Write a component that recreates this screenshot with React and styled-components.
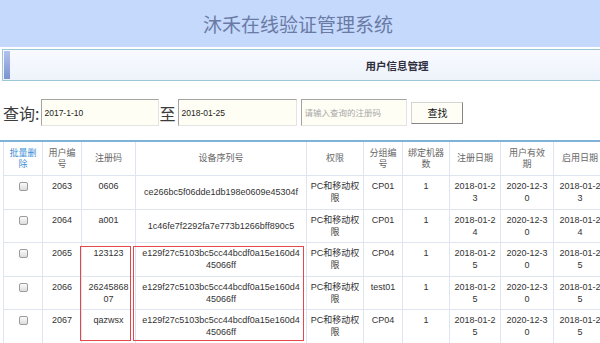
import React from 'react'
import styled, { createGlobalStyle } from 'styled-components'

const GlobalStyle = createGlobalStyle`
    html, body {
        margin: 0;
        padding: 0;
        overflow: hidden;
        background: #fff;
        font-family: "Liberation Sans", "Noto Sans CJK SC", sans-serif;
    }
`

const Page = styled.div`
    width: 600px;
    height: 343px;
    overflow: hidden;
`

const Header = styled.div`
    height: 47px;
    background-color: #c4d9fc;
    display: flex;
    align-items: center;
    justify-content: center;
`

const Title = styled.h1`
    margin: 0 4px 0 0;
    font-family: "Noto Sans CJK SC", sans-serif;
    font-weight: normal;
    font-size: 19px;
    color: #6b7aa5;
`

const SubBar = styled.div`
    margin: 2px 0 0 2px;
    height: 28px;
    border: 1px solid #9cc7d7;
    border-right: none;
    padding: 1px 0 1px 1px;
    display: flex;
    background: linear-gradient(#f8faff, #eef3fb);
`

const Accent = styled.div`
    width: 6px;
    background: linear-gradient(#b3c1ec, #7d93d0);
`

const SubTitle = styled.div`
    flex: 1;
    display: flex;
    align-items: center;
    justify-content: center;
    padding-left: 184px;
    font-family: "Noto Sans CJK SC", sans-serif;
    font-weight: bold;
    font-size: 10.5px;
    color: #2e2e3e;
`

const QueryRow = styled.div`
    margin-top: 18px;
    padding-left: 3px;
    height: 27px;
    display: flex;
    align-items: center;
`

const Label = styled.span`
    font-family: "Noto Sans CJK SC", sans-serif;
    font-size: 16px;
    color: #3c3c3c;
    margin-right: ${p => p.gap || 1}px;
`

const Field = styled.input`
    box-sizing: border-box;
    width: ${p => p.w}px;
    height: 27px;
    margin-right: ${p => p.gap || 0}px;
    padding: 0 2px;
    border: 1px solid;
    border-color: #a3a3a3 #e4e4e4 #e4e4e4 #a3a3a3;
    background-color: #fffef4;
    font-family: "Liberation Sans", "Noto Sans CJK SC", sans-serif;
    font-size: 8.5px;
    color: #222;
    outline: none;
    &::placeholder {
        color: #a8a8a8;
    }
`

const SearchBtn = styled.button`
    box-sizing: border-box;
    width: 52px;
    height: 22px;
    border: 1px solid;
    border-color: #d4d4d4 #858585 #858585 #d4d4d4;
    background-color: #fffef6;
    font-family: "Noto Sans CJK SC", sans-serif;
    font-size: 10px;
    color: #111;
    padding: 0;
`

const TableWrap = styled.div`
    position: relative;
    margin-top: 14px;
    border-top: 2px solid #7fb2d9;
`

const Table = styled.table`
    margin-left: 3px;
    width: 603px;
    table-layout: fixed;
    border-collapse: collapse;
    font-size: 9px;
`

const Th = styled.th`
    padding: 5.5px 4.5px;
    line-height: 11px;
    font-weight: normal;
    color: ${p => (p.link ? '#3f8fd6' : '#666')};
    border: 1px solid #dfe5ee;
    border-top: none;
    vertical-align: middle;
    word-break: break-all;
`

const Td = styled.td`
    padding: 4.25px ${p => (p.wide ? 5 : 3)}px;
    line-height: 12px;
    color: #333;
    text-align: center;
    border: 1px solid #dfe5ee;
    vertical-align: ${p => (p.mid ? 'middle' : 'top')};
    word-break: break-all;
`

const Check = styled.input`
    appearance: none;
    display: block;
    margin: 2px auto 0;
    width: 9px;
    height: 9px;
    border: 1px solid #9c9c9c;
    border-radius: 2px;
    background: linear-gradient(#fbfbfb, #dcdcdc);
`

const Mark = styled.div`
    position: absolute;
    top: 104px;
    left: ${p => p.x}px;
    width: ${p => p.w}px;
    height: 95px;
    border: 1.5px solid #e5484b;
    box-sizing: border-box;
`

const columns = [
    { title: '批量删除', width: 39, link: true },
    { title: '用户编号', width: 39 },
    { title: '注册码', width: 54 },
    { title: '设备序列号', width: 171 },
    { title: '权限', width: 57 },
    { title: '分组编号', width: 39 },
    { title: '绑定机器数', width: 47 },
    { title: '注册日期', width: 51 },
    { title: '用户有效期', width: 53 },
    { title: '启用日期', width: 53 },
]

const users = [
    ['2063', '0606', 'ce266bc5f06dde1db198e0609e45304f', 'CP01', '2018-01-23'],
    ['2064', 'a001', '1c46fe7f2292fa7e773b1266bff890c5', 'CP01', '2018-01-24'],
    ['2065', '123123', 'e129f27c5103bc5cc44bcdf0a15e160d445066ff', 'CP04', '2018-01-25'],
    ['2066', '2624586807', 'e129f27c5103bc5cc44bcdf0a15e160d445066ff', 'test01', '2018-01-25'],
    ['2067', 'qazwsx', 'e129f27c5103bc5cc44bcdf0a15e160d445066ff', 'CP04', '2018-01-25'],
]

function App() {
    return (
        <Page>
            <GlobalStyle />
            <Header>
                <Title>沐禾在线验证管理系统</Title>
            </Header>
            <SubBar>
                <Accent />
                <SubTitle>用户信息管理</SubTitle>
            </SubBar>
            <QueryRow>
                <Label gap={2}>查询:</Label>
                <Field w={118} defaultValue="2017-1-10" />
                <Label gap={3}>至</Label>
                <Field w={119} gap={4} defaultValue="2018-01-25" />
                <Field w={106} gap={4} placeholder="请输入查询的注册码" />
                <SearchBtn>查找</SearchBtn>
            </QueryRow>
            <TableWrap>
                <Table>
                    <colgroup>
                        {columns.map(c => <col key={c.title} style={{ width: c.width }} />)}
                    </colgroup>
                    <thead>
                        <tr>
                            {columns.map(c => <Th key={c.title} link={c.link}>{c.title}</Th>)}
                        </tr>
                    </thead>
                    <tbody>
                        {users.map(u =>
                            <tr key={u[0]}>
                                <Td><Check type="checkbox" /></Td>
                                <Td>{u[0]}</Td>
                                <Td wide>{u[1]}</Td>
                                <Td wide mid>{u[2]}</Td>
                                <Td>PC和移动权限</Td>
                                <Td>{u[3]}</Td>
                                <Td>1</Td>
                                <Td>{u[4]}</Td>
                                <Td>2020-12-30</Td>
                                <Td>{u[4]}</Td>
                            </tr>
                        )}
                    </tbody>
                </Table>
                <Mark x={80} w={51} />
                <Mark x={133} w={171} />
            </TableWrap>
        </Page>
    )
}

export default App
